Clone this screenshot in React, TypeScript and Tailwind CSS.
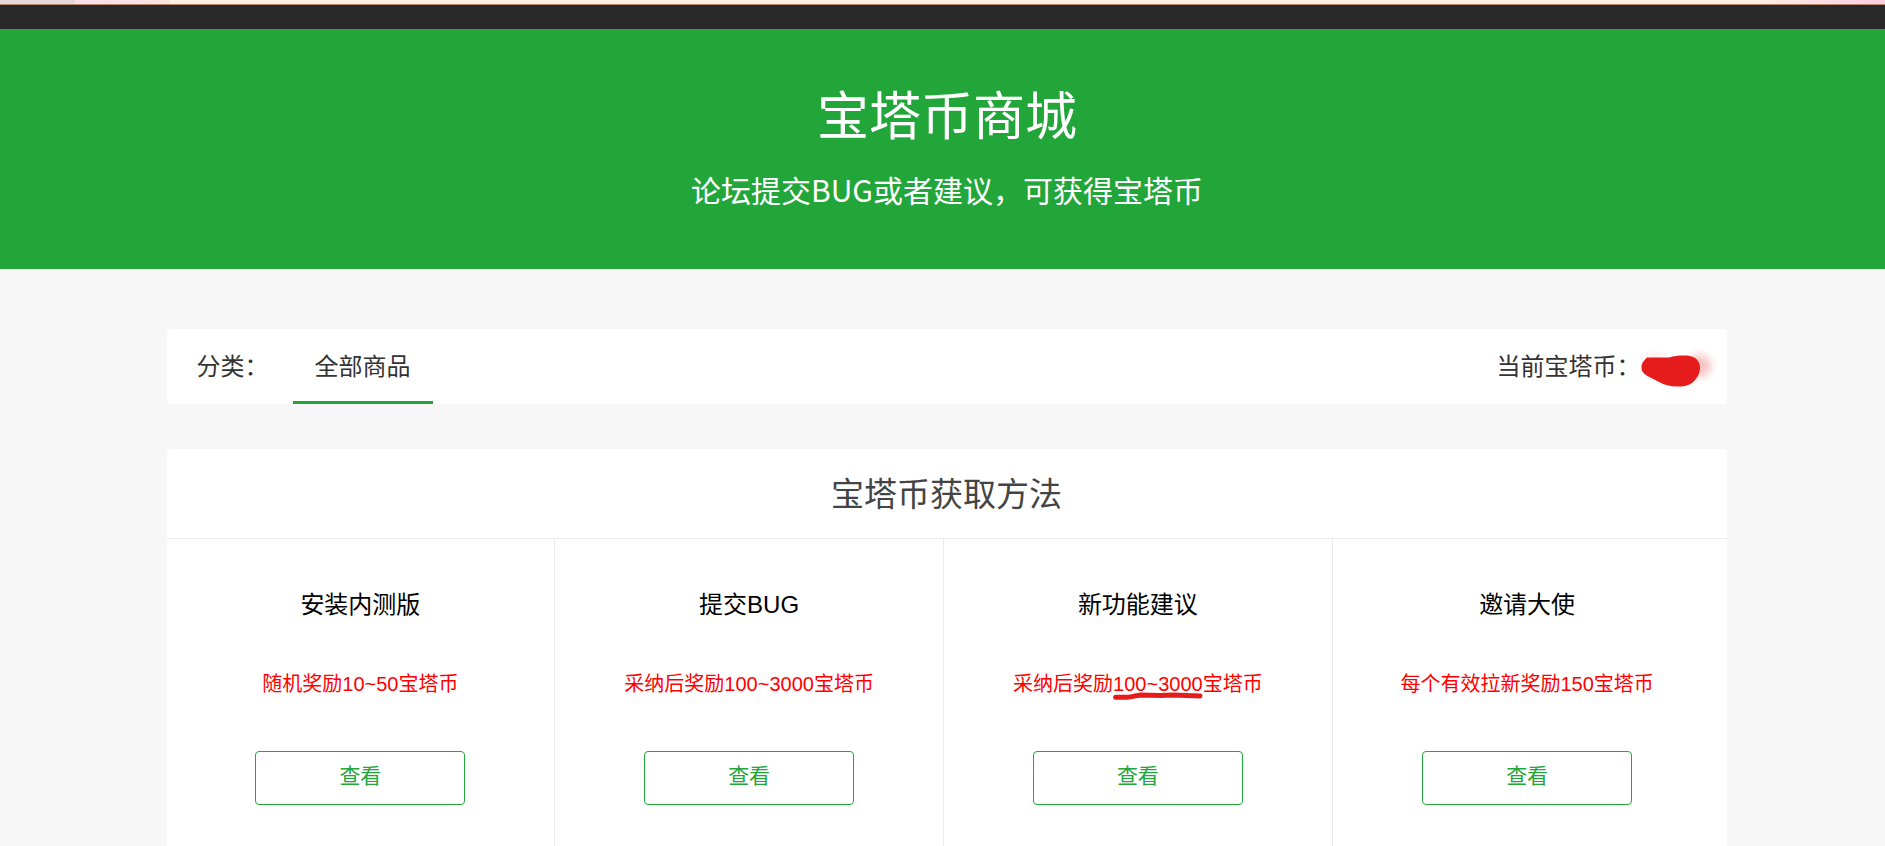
import React from "react";

type Method = {
  title: string;
  before: string;
  amount: string;
  marked?: boolean;
};

const methods: Method[] = [
  { title: "安装内测版", before: "随机奖励", amount: "10~50" },
  { title: "提交BUG", before: "采纳后奖励", amount: "100~3000" },
  { title: "新功能建议", before: "采纳后奖励", amount: "100~3000", marked: true },
  { title: "邀请大使", before: "每个有效拉新奖励", amount: "150" },
];

// Red scribble that hides the balance
const Scribble: React.FC = () => (
  <svg
    className="absolute top-1/2 right-0.5 -translate-y-1/2"
    width="88"
    height="48"
    viewBox="0 0 88 48"
    aria-hidden="true"
  >
    <defs>
      <filter id="haze" x="-50%" y="-50%" width="200%" height="200%">
        <feGaussianBlur stdDeviation="4" />
      </filter>
    </defs>
    <ellipse cx="62" cy="23" rx="12" ry="11" fill="#e61c1c" opacity="0.28" filter="url(#haze)" />
    <ellipse cx="18" cy="14" rx="9" ry="3" fill="#e61c1c" opacity="0.15" filter="url(#haze)" />
    <path
      d="M10 14.5 L32 14.5 C37 13 41 12.5 46 12.5 C51 12.5 55 13 58 15 C61 17 63 20 63 25 C63 30 60 36 55 40 C51 43 46 43.500 40 43.500 C33 43.500 27 42 21 38.500 C16 35.500 11 34 7.500 31 C5 28.500 4.500 27 4.500 24 C4.500 20 7 17.500 10 14.500 Z"
      fill="#e61c1c"
    />
  </svg>
);

const Underline: React.FC = () => (
  <svg
    className="absolute top-full left-0 -mt-1 w-full"
    height="8"
    viewBox="0 0 90 8"
    preserveAspectRatio="none"
    aria-hidden="true"
  >
    <path
      d="M2.500 5.200 L15 5.200 C20 5 22 3.500 28 3 L48 3.500 L60 3 L87.500 4"
      fill="none"
      stroke="#e61c1c"
      strokeWidth="5"
      strokeLinecap="round"
      strokeLinejoin="round"
    />
  </svg>
);

const App: React.FC = () => {
  return (
    <div className="flex min-h-screen flex-col bg-[#f7f7f7] font-['Liberation_Sans','Noto_Sans_CJK_SC',sans-serif] text-[#333]">
      {/* Top bar */}
      <div className="flex h-[5px] border-b border-[#b98872]">
        <div className="w-[4%] bg-[#e3d9d8]" />
        <div className="w-[5%] bg-linear-to-r from-[#f8dfea] to-[#fde4e0]" />
        <div className="flex-1 bg-[#fff0e2]" />
        <div className="w-[7%] bg-linear-to-r from-[#fff0e2] to-[#fbcde4]" />
      </div>
      <div className="h-6 bg-[#282828]" />

      {/* Banner */}
      <header className="flex h-60 flex-col items-center bg-[#22a63a] pt-12 pl-[9px] font-['Noto_Sans_CJK_SC',sans-serif] text-white">
        <h1 className="text-[52px] leading-[72px]">宝塔币商城</h1>
        <p className="mt-5 text-[30px] leading-10">论坛提交BUG或者建议，可获得宝塔币</p>
      </header>

      <main className="flex flex-1 flex-col pl-2">
        <div className="mx-auto flex w-full max-w-[1560px] flex-1 flex-col">
          {/* Category bar */}
          <nav className="mt-[60px] flex h-[75px] items-stretch rounded-sm bg-white px-[30px] text-2xl leading-[75px]">
            <span>分类：</span>
            <a href="#all" className="ml-6 border-b-3 border-[#22a63a] px-[22px]">
              全部商品
            </a>
            <div className="relative -mr-[30px] ml-auto pr-[86px]">
              当前宝塔币：
              <Scribble />
            </div>
          </nav>

          {/* How to get coins */}
          <section className="mt-[45px] flex flex-1 flex-col rounded-t-sm bg-white">
            <h2 className="border-b border-[#ebebeb] pt-0.5 text-center text-[33px] leading-[87px] text-[#444]">
              宝塔币获取方法
            </h2>
            <ul className="grid flex-1 grid-cols-4 pr-[5px]">
              {methods.map((method) => (
                <li
                  key={method.title}
                  className="flex flex-col items-center border-r border-[#ebebeb] pt-12 text-center last:border-r-0"
                >
                  <h3 className="text-2xl leading-9 text-black">{method.title}</h3>
                  <p className="mt-[45px] text-[20px] leading-8 text-[#f00]">
                    {method.before}
                    <span className="relative inline-block leading-6">
                      {method.amount}
                      {method.marked && <Underline />}
                    </span>
                    宝塔币
                  </p>
                  <button
                    type="button"
                    className="mt-[51px] h-[54px] w-[210px] rounded-sm border border-[#22a63a] pb-1 text-[21px] text-[#22a63a]"
                  >
                    查看
                  </button>
                </li>
              ))}
            </ul>
          </section>
        </div>
      </main>
    </div>
  );
};

export default App;
